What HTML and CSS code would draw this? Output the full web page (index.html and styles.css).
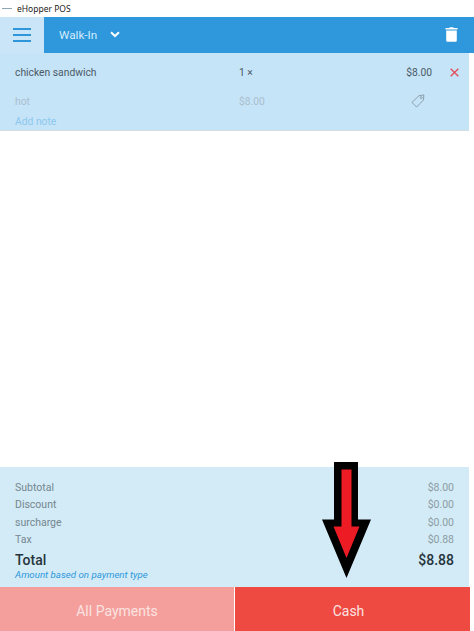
FILE: index.html
```html
<!DOCTYPE html>
<html>
<head>
	<meta http-equiv="Content-Type" content="text/html;charset=UTF-8" />
	<title>eHopper POS</title>
	<link rel="stylesheet" href="styles.css">
</head>
<body>
	<div class="titlebar">
		<span class="titlebar_icon"></span>
		<span class="titlebar_text">eHopper POS</span>
	</div>
	<div class="app">
		<div class="main">
			<div class="header">
				<div class="menu_btn">
					<span class="menu_line"></span>
					<span class="menu_line"></span>
					<span class="menu_line"></span>
				</div>
				<div class="header_bar">
					<span class="customer">Walk-In</span>
					<svg class="chevron" width="10" height="7" viewBox="0 0 10 7"><path d="M1 1.2 L5 5 L9 1.2" fill="none" stroke="#fff" stroke-width="2"/></svg>
					<svg class="trash" width="13" height="15" viewBox="0 0 13 15"><path d="M4.5 1 V0.2 H8.5 V1 H12.5 V2.6 H0.5 V1 Z M1.2 3.6 H11.8 V13.6 Q11.8 14.8 10.6 14.8 H2.4 Q1.2 14.8 1.2 13.6 Z" fill="#fff"/></svg>
				</div>
			</div>
			<div class="item">
				<div class="item_row">
					<span class="item_name">chicken sandwich</span>
					<span class="item_qty">1 ×</span>
					<span class="item_price">$8.00</span>
					<svg class="item_remove" width="9" height="9" viewBox="0 0 9 9"><path d="M0.7 0.7 L8.3 8.3 M8.3 0.7 L0.7 8.3" stroke="#e2505c" stroke-width="1.4"/></svg>
				</div>
				<div class="item_row item_sub">
					<span class="item_name">hot</span>
					<span class="item_qty">$8.00</span>
					<svg class="item_tag" width="14" height="14" viewBox="0 0 15 15"><path d="M1 9 L8.6 1.8 L13.8 1 L13.4 6.4 L6 14 Z" fill="none" stroke="#7f939f" stroke-width="0.9"/><circle cx="11" cy="3.9" r="1.1" fill="none" stroke="#7f939f" stroke-width="0.8"/></svg>
				</div>
				<div class="add_note">Add note</div>
			</div>
			<div class="spacer"></div>
			<div class="summary">
				<div class="sum_row"><span>Subtotal</span><span class="sum_val">$8.00</span></div>
				<div class="sum_row"><span>Discount</span><span class="sum_val">$0.00</span></div>
				<div class="sum_row"><span>surcharge</span><span class="sum_val">$0.00</span></div>
				<div class="sum_row"><span>Tax</span><span class="sum_val">$0.88</span></div>
				<div class="sum_row sum_total"><span>Total</span><span>$8.88</span></div>
				<div class="sum_note">Amount based on payment type</div>
			</div>
			<div class="pay">
				<div class="pay_all">All Payments</div>
				<div class="pay_cash">Cash</div>
			</div>
		</div>
	</div>
	<svg class="arrow" width="50" height="117" viewBox="0 0 50 117">
		<path d="M12 0 H36 V57.500 H49 L24.500 116 L0 57.500 H12 Z" fill="#000"/>
		<path d="M19.500 7.500 H29.500 V64.500 H37.500 L24.500 96 L11.500 64.500 H19.500 Z" fill="#ed1c24"/>
	</svg>
</body>
</html>
```

FILE: styles.css
```css
html, body{
	margin:0;
	padding:0;
	height:100%;
	overflow:hidden;
	background:#fff;
	font-family:"Roboto","Liberation Sans",sans-serif;
}
body{
	position:relative;
	display:flex;
	flex-direction:column;
}
.titlebar{
	height:17px;
	display:flex;
	align-items:center;
	font-family:"Noto Sans","Liberation Sans",sans-serif;
	font-size:8.500px;
	color:#222;
}
.titlebar_icon{
	width:10px;
	height:1px;
	margin:0 5px 0 2px;
	background:#8fa6b5;
}
.app{
	flex:1;
	display:flex;
	min-height:0;
}
.main{
	width:469px;
	display:flex;
	flex-direction:column;
}
.header{
	height:36px;
	display:flex;
	width:474px;
}
.menu_btn{
	width:44px;
	background:#c9e5f7;
	display:flex;
	flex-direction:column;
	justify-content:center;
	align-items:center;
	gap:4px;
}
.menu_line{
	width:18px;
	height:2px;
	background:#2f96d9;
}
.header_bar{
	flex:1;
	display:flex;
	align-items:center;
	background:#2f97dc;
	padding-left:15px;
	padding-bottom:1px;
}
.customer{
	font-size:11.700px;
	color:#d4ecfb;
}
.chevron{
	margin-left:13px;
}
.trash{
	margin-left:auto;
	margin-right:16px;
}
.item{
	height:78px;
	box-sizing:border-box;
	background:#c6e4f8;
	border-bottom:1px solid #d5dde3;
	padding:0 10px 0 15px;
	font-size:10.300px;
}
.item_row{
	display:flex;
	align-items:center;
	height:38px;
	color:#4b5a64;
}
.item_name{
	width:224px;
}
.item_qty{
	width:50px;
}
.item_price{
	margin-left:auto;
	margin-right:18px;
}
.item_sub{
	height:22px;
	margin-top:-1px;
	color:#a9bfcd;
}
.item_tag{
	margin-left:auto;
	margin-right:34px;
}
.add_note{
	color:#8cc8ee;
	margin-top:3px;
}
.spacer{
	flex:1;
}
.summary{
	height:120px;
	box-sizing:border-box;
	background:#d2ebf6;
	padding:12px 15px 0;
	font-size:10.500px;
	color:#76868f;
}
.sum_row{
	display:flex;
	justify-content:space-between;
	height:17.300px;
	line-height:17.300px;
}
.sum_val{
	color:#8d9ba3;
}
.sum_total{
	height:17px;
	line-height:17px;
	margin-top:3.500px;
	font-size:14px;
	font-weight:500;
	color:#27343c;
}
.sum_note{
	font-size:9.700px;
	font-style:italic;
	color:#2f97dc;
	line-height:11px;
}
.pay{
	height:44px;
	display:flex;
	width:474px;
	font-size:14px;
	color:#fbe3e1;
}
.pay_all{
	width:234px;
	background:#f49f9b;
	text-align:center;
	line-height:48px;
}
.pay_cash{
	width:235px;
	box-sizing:border-box;
	margin-left:1px;
	padding-right:8px;
	background:#ef4a42;
	text-align:center;
	line-height:48px;
}
/* annotation drawn over the screenshot */
.arrow{
	position:absolute;
	left:321.500px;
	top:461.500px;
}
```
